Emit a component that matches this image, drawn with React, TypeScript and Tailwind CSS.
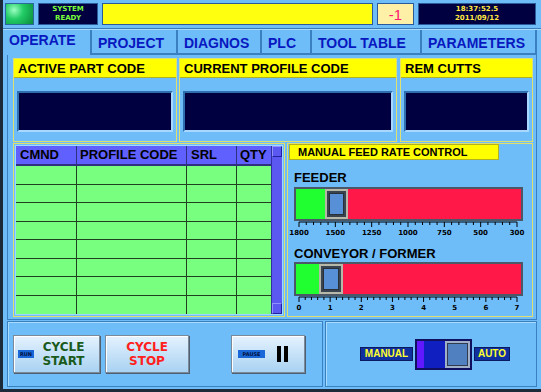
import React from "react";

const font = "font-['Liberation_Sans',Arial,sans-serif]";

const TopPanel = ({ title, width }: { title: string; width: string }) => (
  <div className={`${width} flex flex-col border border-[#e0e070] bg-[#6ebcf8]`}>
    <div className="h-[19px] bg-[#ffff00] border-b border-[#b0b020] pl-[4px] text-[13px] font-bold leading-[19px] text-black">
      {title}
    </div>
    <div className="flex-1 px-[3px] pt-[13px]">
      <div className="h-[41px] bg-[#000040] border-2 border-t-[#2f6fb0] border-l-[#2f6fb0] border-b-[#a8d8ff] border-r-[#a8d8ff]" />
    </div>
  </div>
);

const Scale = ({
  labels,
  intervals,
  major,
}: {
  labels: string[];
  intervals: number;
  major: number;
}) => {
  const x0 = 5;
  const x1 = 223;
  const step = (x1 - x0) / intervals;
  const ticks = Array.from({ length: intervals + 1 }, (_, i) => i);
  return (
    <svg width="229" height="16" className="block overflow-visible">
      <line x1={x0} y1="1" x2={x1} y2="1" stroke="#000" strokeWidth="1" />
      {ticks.map((i) => (
        <line
          key={i}
          x1={x0 + i * step}
          y1="1"
          x2={x0 + i * step}
          y2={i % major === 0 ? 6 : 4}
          stroke="#000"
          strokeWidth="1"
        />
      ))}
      {labels.map((l, i) => {
        const x = x0 + i * major * step;
        return (
          <text
            key={l}
            x={x}
            y="14"
            textAnchor="middle"
            fontSize="7"
            fontWeight="bold"
            fontFamily="'DejaVu Sans', sans-serif"
            fill="#000"
          >
            {l}
          </text>
        );
      })}
    </svg>
  );
};

const Slider = ({ green, thumb }: { green: string; thumb: string }) => (
  <div className="w-[229px] h-[34px] flex border-2 border-[#4a5868] bg-[#4a5868]">
    <div className={`${green} bg-[#20ff30]`} />
    <div className={`${thumb} border-2 border-[#b8b8a8] bg-[#3a4450] p-[2px]`}>
      <div className="h-full bg-[#5890d8] border border-[#2a3038]" />
    </div>
    <div className="flex-1 bg-[#ff1848]" />
  </div>
);

const Btn = ({ w, children }: { w: string; children: React.ReactNode }) => (
  <div
    className={`${w} h-[38px] flex items-center bg-gradient-to-b from-[#e4f2fe] to-[#a9d2f2] border border-[#7a8a9a] shadow-[inset_1px_1px_0_#ffffff,1px_1px_0_#506070]`}
  >
    {children}
  </div>
);

export default function App() {
  const tabs = [
    { t: "OPERATE", w: "w-[89px]", sel: true },
    { t: "PROJECT", w: "w-[86px]" },
    { t: "DIAGNOS", w: "w-[84px]" },
    { t: "PLC", w: "w-[50px]" },
    { t: "TOOL TABLE", w: "w-[110px]" },
    { t: "PARAMETERS", w: "w-[115px]" },
  ];
  const rows = Array.from({ length: 8 }, (_, i) => i);
  return (
    <div
      className={`${font} w-[541px] h-[392px] overflow-hidden bg-[#6ebcf8] border-l-[3px] border-b-[3px] border-[#1c2a3a] flex flex-col`}
    >
      {/* status bar */}
      <div className="h-[29px] flex items-center pl-[2px] gap-[4px] border-b border-[#3a7ab8]">
        <div className="w-[29px] h-[22px] bg-[radial-gradient(circle_at_30%_30%,#9affc0_0%,#22cc66_40%,#0a8a3a_100%)] border border-[#2a6a9a]" />
        <div className="w-[60px] h-[22px] bg-[#000040] border border-[#2a5a9a] flex flex-col items-center justify-center text-[#7aff3a] text-[7px] font-bold leading-[9px] font-['DejaVu_Sans',sans-serif]">
          <span>SYSTEM</span>
          <span>READY</span>
        </div>
        <div className="w-[271px] h-[22px] bg-[#ffff10] border border-[#2a5a9a]" />
        <div className="w-[37px] h-[22px] bg-[#fff0a8] border border-[#2a5a9a] flex items-center justify-center text-[#ff1870] text-[15px] leading-none">
          -1
        </div>
        <div className="w-[118px] h-[22px] bg-[#000040] border border-[#2a5a9a] flex flex-col items-center justify-center text-[#ffe840] text-[7px] font-bold leading-[9px] font-['DejaVu_Sans',sans-serif]">
          <span>18:37:52.5</span>
          <span>2011/09/12</span>
        </div>
      </div>

      {/* tabs */}
      <div className="h-[26px] flex border-t border-[#a8dcff]">
        {tabs.map((tab) => (
          <div
            key={tab.t}
            className={`${tab.w} border-r-2 border-r-[#3a80c0] ${
              tab.sel ? "pt-[2px]" : "pt-[5px] border-b-2 border-b-[#3a80c0]"
            } pl-[6px] text-[14px] font-bold text-[#0818c0] leading-[16px]`}
          >
            {tab.t}
          </div>
        ))}
      </div>

      {/* main panel */}
      <div className="ml-[4px] w-[530px] h-[265px] border border-[#3a80c0] border-t-0 pl-[5px] pr-[3px] pt-[3px] flex flex-col gap-[1px]">
        <div className="h-[84px] flex">
          <TopPanel title="ACTIVE PART CODE" width="w-[164px]" />
          <div className="w-[2px]" />
          <TopPanel title="CURRENT PROFILE CODE" width="w-[218px]" />
          <div className="w-[3px]" />
          <TopPanel title="REM CUTTS" width="w-[133px]" />
        </div>
        <div className="h-[174px] flex gap-[2px]">
          {/* table */}
          <div className="w-[272px] border border-[#e0e070] p-[1px]">
            <div className="h-full flex border border-[#a0d8ff]">
              <div className="flex-1 flex flex-col">
                <div className="h-[20px] flex bg-[#6060ff] border-b-2 border-[#303080] text-[13px] font-bold text-black leading-[18px]">
                  <div className="w-[61px] pl-[4px] border-r border-[#303080]">CMND</div>
                  <div className="w-[110px] pl-[3px] border-r border-[#303080]">PROFILE CODE</div>
                  <div className="w-[50px] pl-[4px] border-r border-[#303080]">SRL</div>
                  <div className="flex-1 pl-[3px]">QTY</div>
                </div>
                {rows.map((r) => (
                  <div
                    key={r}
                    className="h-[19px] flex bg-[#78ff80] border-b border-[#204020] last:border-b-0"
                  >
                    <div className="w-[61px] border-r border-[#204020]" />
                    <div className="w-[110px] border-r border-[#204020]" />
                    <div className="w-[50px] border-r border-[#204020]" />
                    <div className="flex-1" />
                  </div>
                ))}
              </div>
              <div className="w-[11px] bg-[#5a58f0] flex flex-col justify-between border-l border-[#3030a0]">
                <div className="h-[11px] border border-[#9090ff] border-r-[#2020a0] border-b-[#2020a0]" />
                <div className="h-[11px] border border-[#9090ff] border-r-[#2020a0] border-b-[#2020a0]" />
              </div>
            </div>
          </div>

          {/* feed rate */}
          <div className="flex-1 border border-[#e0e070] flex flex-col pl-[6px]">
            <div className="-ml-[5px] w-[210px] h-[16px] bg-[#ffff00] border border-[#b0b020] pl-[8px] text-[11px] font-bold leading-[14px] text-black">
              MANUAL FEED RATE CONTROL
            </div>
            <div className="mt-[10px] text-[13px] font-bold leading-[15px] text-black">FEEDER</div>
            <div className="mt-[2px]">
              <Slider green="w-[29px]" thumb="w-[23px]" />
            </div>
            <Scale
              labels={["1800", "1500", "1250", "1000", "750", "500", "300"]}
              intervals={30}
              major={5}
            />
            <div className="mt-[9px] text-[13px] font-bold leading-[15px] text-black">
              CONVEYOR / FORMER
            </div>
            <div className="mt-[1px]">
              <Slider green="w-[23px]" thumb="w-[24px]" />
            </div>
            <Scale labels={["0", "1", "2", "3", "4", "5", "6", "7"]} intervals={35} major={5} />
          </div>
        </div>
      </div>

      {/* bottom */}
      <div className="mt-[1px] ml-[4px] h-[66px] flex gap-[2px]">
        <div className="w-[316px] border border-[#3a80c0] shadow-[inset_1px_1px_0_#a8dcff] flex items-center pl-[5px]">
          <Btn w="w-[87px]">
            <div className="ml-[4px] w-[16px] h-[8px] bg-[#1a68d8] text-[5px] font-bold text-[#001040] leading-[8px] text-center font-['DejaVu_Sans',sans-serif]">
              RUN
            </div>
            <div className="flex-1 text-center text-[12px] font-bold text-[#1a5a1a] leading-[14px] pr-[6px] font-['DejaVu_Sans',sans-serif]">
              CYCLE
              <br />
              START
            </div>
          </Btn>
          <div className="w-[5px]" />
          <Btn w="w-[84px]">
            <div className="flex-1 text-center text-[12px] font-bold text-[#ff2020] leading-[14px] font-['DejaVu_Sans',sans-serif]">
              CYCLE
              <br />
              STOP
            </div>
          </Btn>
          <div className="w-[42px]" />
          <Btn w="w-[74px]">
            <div className="ml-[6px] w-[27px] h-[8px] bg-[#1a68d8] text-[5px] font-bold text-[#001040] leading-[8px] text-center font-['DejaVu_Sans',sans-serif]">
              PAUSE
            </div>
            <div className="ml-[12px] flex gap-[3px]">
              <div className="w-[4px] h-[16px] bg-black" />
              <div className="w-[4px] h-[16px] bg-black" />
            </div>
          </Btn>
        </div>
        <div className="w-[212px] border border-[#3a80c0] shadow-[inset_1px_1px_0_#a8dcff] flex items-center pl-[34px]">
          <div className="w-[53px] h-[14px] bg-[#1030a0] border border-[#0a1a60] text-[10px] font-bold text-[#ffff30] leading-[12px] text-center">
            MANUAL
          </div>
          <div className="ml-[2px] w-[57px] h-[31px] bg-[#1020c0] border-2 border-[#101060] flex">
            <div className="w-[7px] bg-[#6018ff]" />
            <div className="flex-1" />
            <div className="w-[25px] bg-[#5080c0] border-2 border-[#a0b0c8] shadow-[inset_0_0_0_1px_#303a50]" />
          </div>
          <div className="ml-[2px] w-[36px] h-[14px] bg-[#1030a0] border border-[#0a1a60] text-[10px] font-bold text-[#ffff30] leading-[12px] text-center">
            AUTO
          </div>
        </div>
      </div>
    </div>
  );
}
